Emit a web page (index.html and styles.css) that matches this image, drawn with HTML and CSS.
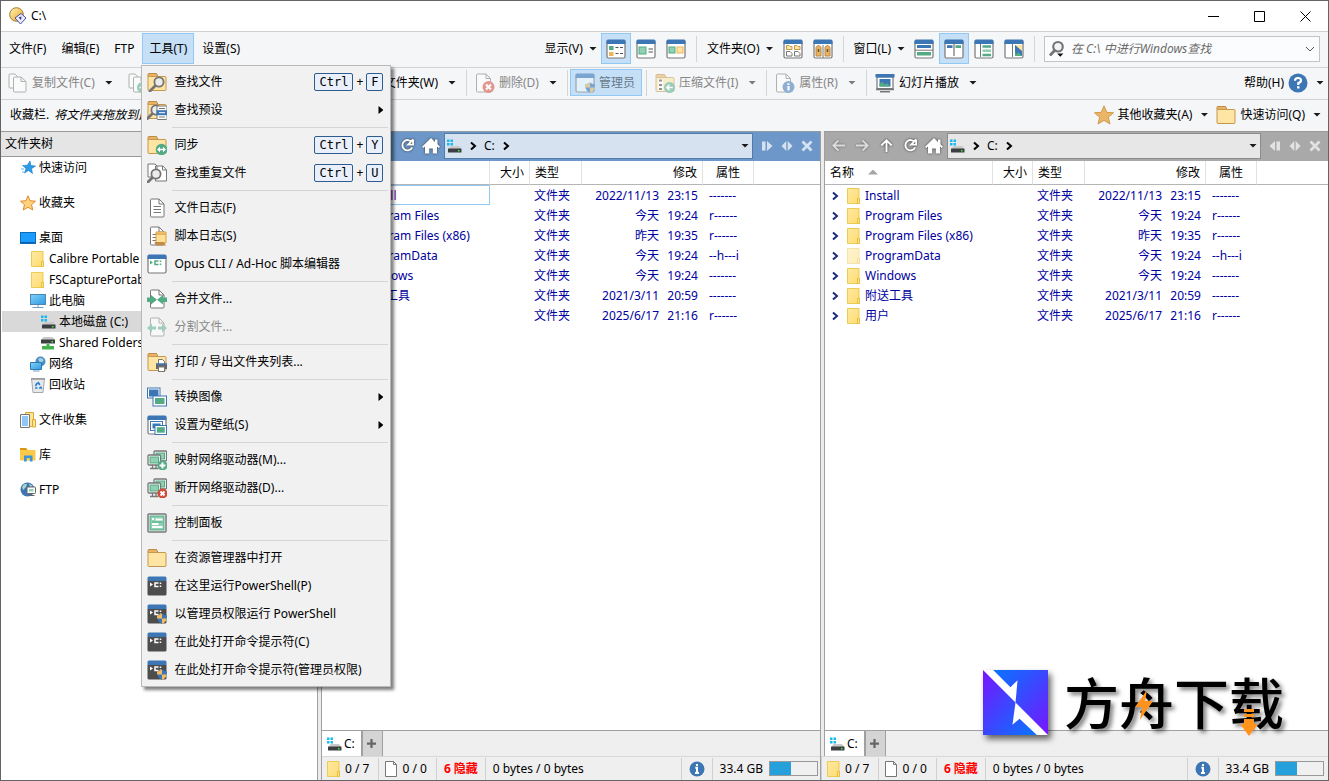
FILE: index.html
```html
<!DOCTYPE html>
<html lang="zh-CN">
<head>
    <meta charset="UTF-8">
    <meta name="viewport" content="width=device-width, initial-scale=1.0">
    <title>C:\</title>
    <link rel="stylesheet" href="styles.css">
</head>
<body>
    <!-- Icon set -->
    <svg class="sprite" aria-hidden="true">
        <defs>
            <linearGradient id="gFolder" x1="0" y1="0" x2="1" y2="1"><stop offset="0" stop-color="#ffe9a0"/><stop offset="1" stop-color="#fddc72"/></linearGradient>
            <linearGradient id="gBall" x1="0" y1="0" x2="1" y2="1"><stop offset="0" stop-color="#fff3b8"/><stop offset="1" stop-color="#eba422"/></linearGradient>
            <linearGradient id="gScreen" x1="0" y1="0" x2="1" y2="1"><stop offset="0" stop-color="#7fd0fb"/><stop offset="1" stop-color="#2f9be0"/></linearGradient>
            <linearGradient id="gLogoA" x1="0" y1="0" x2="1" y2="1"><stop offset="0" stop-color="#0a74ff"/><stop offset="0.4" stop-color="#3050ff"/><stop offset="1" stop-color="#7a14ff"/></linearGradient>
            <linearGradient id="gLogoB" x1="0" y1="0" x2="1" y2="1"><stop offset="0" stop-color="#7a14ff"/><stop offset="0.6" stop-color="#3050ff"/><stop offset="1" stop-color="#0a74ff"/></linearGradient>
        </defs>
        <symbol id="i-app" viewBox="0 0 18 18">
            <circle cx="7.500" cy="7.500" r="6.800" fill="url(#gBall)" stroke="#a5792a"/>
            <path d="M6 11L12 6.500L17 11L11.500 17z" fill="#e9edfb" stroke="#4a4f9c"/>
            <path d="M9.500 10.500L12.500 9.500L12 13z" fill="#303890"/>
        </symbol>
        <symbol id="i-folder" viewBox="0 0 20 20">
            <path d="M1 5V2.500Q1 1.500 2 1.500H9.500L11 4.500H18" fill="#e8b366" stroke="#c08a42"/>
            <rect x="1" y="4.500" width="18" height="14" rx="1" fill="#fee5a4" stroke="#c5974f"/>
        </symbol>
        <symbol id="i-page" viewBox="0 0 20 20">
            <path d="M3.500 2Q3.500 1 4.500 1H12L17 6V18Q17 19 16 19H4.500Q3.500 19 3.500 18z" fill="#fff" stroke="#777"/>
            <path d="M12 1V6H17" fill="none" stroke="#777"/>
        </symbol>
        <symbol id="i-win" viewBox="0 0 20 20">
            <rect x="1" y="1.500" width="18" height="17.500" rx="1.500" fill="#fff" stroke="#777" stroke-width="1.200"/>
            <path d="M.5 5V2Q.5.5 2 .5H18Q19.500.5 19.500 2V5z" fill="#3d76b4"/>
        </symbol>
        <symbol id="i-mag" viewBox="0 0 20 20">
            <path d="M9 13L3 19" stroke="#747474" stroke-width="2.800" stroke-linecap="round"/>
            <circle cx="12" cy="10" r="4.600" fill="#ececec" stroke="#747474" stroke-width="1.800"/>
        </symbol>
        <symbol id="i-shield" viewBox="0 0 20 20">
            <path d="M15 9.500Q17 11 20 11.500Q20 17.500 15 20Q10 17.500 10 11.500Q13 11 15 9.500z" fill="#3d76b4"/>
            <path d="M15 9.500Q13 11 10 11.500L10.200 14.500H15zM15 14.500H19.700Q19 18 15 20z" fill="#f0bb63"/>
        </symbol>
        <symbol id="i-copy" viewBox="0 0 20 20">
            <path d="M1 2Q1 1 2 1H7L9.500 3.500V15H2Q1 15 1 14z" fill="#fff" stroke="#777"/>
            <path d="M5.500 5Q5.500 4 6.500 4H13L18 8.500V18Q18 19 17 19H6.500Q5.500 19 5.500 18zM13 4V8.500H18" fill="#fff" stroke="#777"/>
        </symbol>
        <symbol id="i-move" viewBox="0 0 20 20">
            <use href="#i-copy"/>
            <circle cx="14.500" cy="14.500" r="5.500" fill="#53ab84"/>
            <path d="M11.500 14.500H17M14.800 12L17.300 14.500L14.800 17" fill="none" stroke="#fff" stroke-width="1.600"/>
        </symbol>
        <symbol id="i-newfolder" viewBox="0 0 20 20">
            <use href="#i-folder"/>
            <circle cx="14.500" cy="14.500" r="5.500" fill="#53ab84"/>
            <path d="M14.500 11.500V17.500M11.500 14.500H17.500" stroke="#fff" stroke-width="2"/>
        </symbol>
        <symbol id="i-delete" viewBox="0 0 20 20">
            <path d="M1.500 2Q1.500 1 2.500 1H11L15.500 5.500V19H2.500Q1.500 19 1.500 18zM11 1V5.500H15.500" fill="#fff" stroke="#777"/>
            <circle cx="13.500" cy="14" r="6" fill="#d24a38"/>
            <path d="M11 11.500L16 16.500M16 11.500L11 16.500" stroke="#fff" stroke-width="2.200"/>
        </symbol>
        <symbol id="i-admin" viewBox="0 0 20 20">
            <use href="#i-win"/><use href="#i-shield"/>
        </symbol>
        <symbol id="i-archive" viewBox="0 0 20 20">
            <use href="#i-folder"/>
            <rect x="3" y="6" width="5" height="12" fill="#fff"/>
            <path d="M4 7.500H7M4 12H7M4 16H7" stroke="#444" stroke-width="2.200"/>
            <circle cx="14.500" cy="14.500" r="5.500" fill="#53ab84"/>
            <path d="M17.800 14.500H12M14.500 11.800L11.800 14.500L14.500 17.200" fill="none" stroke="#fff" stroke-width="1.600"/>
        </symbol>
        <symbol id="i-props" viewBox="0 0 20 20">
            <path d="M1.500 2Q1.500 1 2.500 1H11L15.500 5.500V19H2.500Q1.500 19 1.500 18zM11 1V5.500H15.500" fill="#fff" stroke="#777"/>
            <circle cx="13.500" cy="14" r="6" fill="#3d76b4"/>
            <path d="M13.500 10.200V12M13.500 13V17.500" stroke="#fff" stroke-width="2.200"/>
        </symbol>
        <symbol id="i-slides" viewBox="0 0 20 20">
            <path d="M2 4H18V15.500H2z" fill="#fff" stroke="#777" stroke-width="1.200"/>
            <rect x="4.500" y="6" width="11" height="7.500" fill="#3d76b4"/>
            <path d="M4.500 13.500V11L7 9L10 11.500L12 10L15.500 13.500z" fill="#53ab84"/>
            <rect x=".5" y="1" width="19" height="3.500" rx=".5" fill="#3d76b4"/>
            <path d="M1 16.500H19M5 18.800H15" stroke="#777" stroke-width="1.400"/>
        </symbol>
        <symbol id="i-help" viewBox="0 0 20 20">
            <circle cx="10" cy="10" r="9.500" fill="#3d76b4"/>
            <path d="M7 7.800Q7 5 10 5T13 7.500Q13 9.300 10.300 10V12" fill="none" stroke="#fff" stroke-width="2.200"/>
            <rect x="9.100" y="13.200" width="2.400" height="2.300" fill="#fff"/>
        </symbol>
        <symbol id="i-info" viewBox="0 0 16 16">
            <circle cx="8" cy="8" r="7.500" fill="#3d76b4"/>
            <path d="M8 3V5M6.300 6.800H8V12M6 12H10" fill="none" stroke="#fff" stroke-width="2"/>
        </symbol>
        <symbol id="i-star" viewBox="0 0 20 20">
            <path d="M10 .8L12.700 7.300L19.500 7.800L14.300 12.300L16 19L10 15.400L4 19L5.700 12.300L.5 7.800L7.300 7.300z" fill="#ebb566" stroke="#cf9a4b"/>
        </symbol>
        <symbol id="i-search" viewBox="0 0 20 20">
            <path d="M6.500 11.500L2 16" stroke="#757575" stroke-width="3.200" stroke-linecap="round"/>
            <circle cx="10" cy="7.500" r="5.300" fill="#f4f4f4" stroke="#757575" stroke-width="2.400"/>
            <path d="M9 15H16L12.500 18.500z" fill="#111"/>
        </symbol>
        <!-- view modes -->
        <symbol id="i-details" viewBox="0 0 20 20">
            <use href="#i-win"/>
            <rect x="3" y="7" width="4.500" height="4" fill="#53ab84"/><rect x="3" y="13" width="4.500" height="4" fill="#ebb35c"/>
            <path d="M9.500 8.500H12.500M14 8.500H17M9.500 14.500H12.500M14 14.500H17" stroke="#555"/>
        </symbol>
        <symbol id="i-tiles" viewBox="0 0 20 20">
            <use href="#i-win"/>
            <rect x="3" y="8" width="7" height="7" fill="#8fd1b2" stroke="#53ab84"/>
            <path d="M12.500 10H17M12.500 13H17" stroke="#555"/>
        </symbol>
        <symbol id="i-thumbs" viewBox="0 0 20 20">
            <use href="#i-win"/>
            <rect x="3" y="8" width="6" height="6" fill="#8fd1b2" stroke="#53ab84"/><rect x="11" y="8" width="6" height="6" fill="#fee5a4" stroke="#ebb35c"/>
        </symbol>
        <symbol id="i-mixed" viewBox="0 0 20 20">
            <use href="#i-win"/>
            <path d="M3.500 6.500H6L7 7.500H9V10.500H3.500zM11.500 6.500H14L15 7.500H17V10.500H11.500z" fill="#fee5a4" stroke="#c5974f"/>
            <path d="M3.500 12.500H7L9 14.500V17H3.500zM11.500 12.500H15L17 14.500V17H11.500z" fill="#fff" stroke="#777"/>
        </symbol>
        <symbol id="i-locks" viewBox="0 0 20 20">
            <use href="#i-win"/>
            <path d="M3 17V8.500Q5.500 4.500 8 8.500V17zM12 17V8.500Q14.500 4.500 17 8.500V17z" fill="#ebb35c" stroke="#b98643"/>
            <path d="M10 6V19" stroke="#777"/><path d="M5.500 10V13M14.500 10V13" stroke="#555" stroke-width="1.500"/>
        </symbol>
        <symbol id="i-hsplit" viewBox="0 0 20 20">
            <use href="#i-win"/>
            <rect x="3" y="6" width="14" height="3" fill="#3d76b4"/><path d="M1 11.200H19" stroke="#777"/><rect x="3" y="13" width="14" height="3.500" fill="#53ab84"/>
        </symbol>
        <symbol id="i-vsplit" viewBox="0 0 20 20">
            <use href="#i-win"/>
            <rect x="3" y="6.200" width="5.500" height="2.800" fill="#3d76b4"/><rect x="11.500" y="6.200" width="5.500" height="2.800" fill="#53ab84"/><path d="M10 5V17" stroke="#555"/>
        </symbol>
        <symbol id="i-treepane" viewBox="0 0 20 20">
            <use href="#i-win"/>
            <path d="M6.500 5V18" stroke="#777"/><path d="M8.500 7.500H17M8.500 16H17" stroke="#53ab84" stroke-width="2.600"/><path d="M8.500 11.700H17" stroke="#8fd1b2" stroke-width="2.600"/>
        </symbol>
        <symbol id="i-viewer" viewBox="0 0 20 20">
            <use href="#i-win"/>
            <path d="M8.500 5V18" stroke="#777"/><rect x="11" y="6" width="7" height="11" fill="#fee5a4"/><path d="M11 6L18 12V17H11z" fill="#3d76b4"/><path d="M11 13L14 17H11z" fill="#53ab84"/><path d="M14 13L18 17H12z" fill="#53ab84"/>
        </symbol>
        <!-- tools menu -->
        <symbol id="i-find" viewBox="0 0 20 20"><use href="#i-folder"/><use href="#i-mag"/></symbol>
        <symbol id="i-findpreset" viewBox="0 0 20 20">
            <use href="#i-folder"/><use href="#i-mag" x="-3"/>
            <rect x="10" y="6" width="10" height="13.500" rx="1" fill="#fff" stroke="#777"/>
            <path d="M12 8.500H18M12 17H18" stroke="#777"/><rect x="9.500" y="10.200" width="11" height="5" fill="#3d76b4"/><path d="M12 12.700H18" stroke="#fff"/>
        </symbol>
        <symbol id="i-sync" viewBox="0 0 20 20">
            <use href="#i-folder"/>
            <circle cx="14.500" cy="14.500" r="5.800" fill="#53ab84"/>
            <path d="M10 14.500L13 11.700V17.300zM19 14.500L16 11.700V17.300z" fill="#fff"/><path d="M12 14.500H17" stroke="#fff" stroke-width="1.500"/>
        </symbol>
        <symbol id="i-dupes" viewBox="0 0 20 20">
            <path d="M1 1H8L10 3V14H1zM8.500 3H16L19.500 7V18H8.500z" fill="#fff" stroke="#777"/><path d="M15.500 3V7H19.500" fill="none" stroke="#777"/>
            <use href="#i-mag" x="-3" y="1"/>
        </symbol>
        <symbol id="i-log" viewBox="0 0 20 20">
            <use href="#i-page"/><path d="M6.500 8.500H14M6.500 11.500H14M6.500 14.500H14" stroke="#777"/>
        </symbol>
        <symbol id="i-scriptlog" viewBox="0 0 20 20">
            <use href="#i-page"/><path d="M5.500 8.500H9M5.500 11.500H9M5.500 14.500H9" stroke="#777"/>
            <path d="M9 6H19V17H9z" fill="#ffdf95" stroke="#d99e48"/><path d="M9 8H19" stroke="#e3a64f" stroke-width="1.500"/><path d="M7.500 16H17Q17 18 19.500 19.500H9.500Q7.500 19 7.500 16z" fill="#c08c4a"/>
        </symbol>
        <symbol id="i-cli" viewBox="0 0 20 20">
            <use href="#i-win"/>
            <path d="M3 6.500L6 8.500L3 10.500z" fill="#53ab84"/><path d="M11.500 7H8V10.500H11.500M13.500 6.500V8M13.500 9.500V11" fill="none" stroke="#53ab84" stroke-width="1.500"/>
        </symbol>
        <symbol id="i-merge" viewBox="0 0 20 20">
            <use href="#i-page"/><path d="M0 8.500H4V6L10 10.700L4 15.500V13H0zM20 8.500H16V6L10 10.700L16 15.500V13H20z" fill="#53ab84"/>
        </symbol>
        <symbol id="i-split" viewBox="0 0 20 20">
            <use href="#i-page"/><path d="M0 11L5 6.500V9.500H9V12.500H5V15.500zM20 11L15 6.500V9.500H11V12.500H15V15.500z" fill="#53ab84"/>
        </symbol>
        <symbol id="i-print" viewBox="0 0 20 20">
            <use href="#i-folder"/>
            <path d="M11.500 12V7.500H15.500L17.500 9.500V12" fill="#fff" stroke="#777"/><path d="M9 11.500H20V17H9z" fill="#666"/><path d="M9 11.500H20V13H9z" fill="#3d76b4"/><rect x="11.500" y="15" width="6" height="4.500" fill="#fff" stroke="#777"/>
        </symbol>
        <symbol id="i-convert" viewBox="0 0 20 20">
            <rect x=".5" y="1" width="12.500" height="10" fill="#fff" stroke="#3d76b4"/><rect x="2" y="2.500" width="9.500" height="7" fill="#3d76b4"/>
            <rect x="6" y="9" width="13.500" height="10" fill="#fff" stroke="#3d76b4"/><rect x="8" y="11" width="9.500" height="6" fill="#53ab84"/>
        </symbol>
        <symbol id="i-wallpaper" viewBox="0 0 20 20">
            <use href="#i-win"/>
            <rect x="3.500" y="6.500" width="12" height="9" fill="#fff" stroke="#3d76b4"/><rect x="5.500" y="8.500" width="8" height="5" fill="#3d76b4"/>
            <rect x="8" y="10.500" width="11.500" height="9" fill="#fff" stroke="#3d76b4"/><rect x="9.800" y="12.200" width="8" height="5.500" fill="#53ab84"/>
        </symbol>
        <symbol id="i-net" viewBox="0 0 20 20">
            <rect x="7" y="1" width="12.500" height="10" rx="1" fill="#fff" stroke="#777" stroke-width="1.300"/><rect x="9" y="3" width="8.500" height="6" fill="#8fd1b2" stroke="#53ab84"/>
            <rect x="1" y="5" width="12.500" height="10" rx="1" fill="#fff" stroke="#777" stroke-width="1.300"/><rect x="3" y="7" width="8.500" height="6" fill="#8fd1b2" stroke="#53ab84"/>
            <path d="M5.500 15V18M9 15V18M3 18.500H11.500" stroke="#777" stroke-width="1.300"/>
        </symbol>
        <symbol id="i-mapdrive" viewBox="0 0 20 20">
            <use href="#i-net"/><circle cx="15.500" cy="15.500" r="5" fill="#53ab84"/><path d="M15.500 12.500V18.500M12.500 15.500H18.500" stroke="#fff" stroke-width="2"/>
        </symbol>
        <symbol id="i-unmapdrive" viewBox="0 0 20 20">
            <use href="#i-net"/><circle cx="15.500" cy="15.500" r="5" fill="#d24a38"/><path d="M13.500 13.500L17.500 17.500M17.500 13.500L13.500 17.500" stroke="#fff" stroke-width="2"/>
        </symbol>
        <symbol id="i-control" viewBox="0 0 20 20">
            <rect x="1" y="1" width="18" height="18" rx="1" fill="#fff" stroke="#777" stroke-width="1.500"/><rect x="3" y="3" width="14" height="14" fill="#8fd1b2" stroke="#53ab84"/>
            <path d="M5 6H7M8.500 6.500H15.500M5 11H11.500M5 14H15.500" stroke="#fff" stroke-width="2"/><path d="M5 9H15.500" stroke="#53ab84"/>
        </symbol>
        <symbol id="i-shell" viewBox="0 0 20 20">
            <path d="M.5 5H19.500V18Q19.500 19.500 18 19.500H2Q.5 19.500.5 18z" fill="#4d4d4d"/><path d="M.5 5V2Q.5.5 2 .5H18Q19.500.5 19.500 2V5z" fill="#3d76b4"/>
            <path d="M3 6.500L6 8.500L3 10.500z" fill="#fff"/><path d="M11.500 7H8V10.500H11.500M13.500 6.500V8M13.500 9.500V11" fill="none" stroke="#fff" stroke-width="1.500"/>
        </symbol>
        <symbol id="i-shelladmin" viewBox="0 0 20 20"><use href="#i-shell"/><use href="#i-shield"/></symbol>
        <!-- folder tree and lists -->
        <symbol id="i-dir" viewBox="0 0 16 16">
            <path d="M1.500.5H13V15.500H1.500z" fill="url(#gFolder)" stroke="#edcb55"/><path d="M11.500 15.500V10.500H13.500V15.500z" fill="#ffe494" stroke="#e6bd3e"/>
        </symbol>
        <symbol id="i-file" viewBox="0 0 16 16">
            <path d="M2.500.5H10.500L13.500 3.500V15.500H2.500z" fill="#fff" stroke="#777"/><path d="M10.500.5V3.500H13.500" fill="none" stroke="#777"/>
        </symbol>
        <symbol id="i-quick" viewBox="0 0 16 16">
            <path d="M10 1L10.800 5.500L15.500 6L11.500 8.700L12.500 13.500L8.500 10.500L4.500 13L6 8.500L2.500 5.500L7.300 5.300z" fill="#2b9be6" stroke="#1878bd" stroke-width=".6"/>
            <path d="M1 9H4M2 12H4M3.500 6H5" stroke="#59b4ee"/>
        </symbol>
        <symbol id="i-fav" viewBox="0 0 16 16">
            <path d="M8 .8L10 5.700L15.500 6.200L11.500 9.700L12.800 15L8 12.300L3.200 15L4.500 9.700L.5 6.200L6 5.700z" fill="#ffd37e" stroke="#e08b2f"/>
        </symbol>
        <symbol id="i-desktop" viewBox="0 0 16 16"><rect x=".5" y="2.500" width="15" height="11" fill="#1a9dff" stroke="#0e6cb8"/><path d="M1 12.500H15" stroke="#0a5fa8"/></symbol>
        <symbol id="i-pc" viewBox="0 0 16 16"><rect x=".5" y="1.500" width="15" height="10" fill="url(#gScreen)" stroke="#4a87b5"/><path d="M2.500 14.500H13.500M8 12V14" stroke="#6f9fc3"/></symbol>
        <symbol id="i-drive" viewBox="0 0 16 16">
            <path d="M1 1.500H3.500V4H1zM4.500 1.500H7V4H4.500zM1 5H3.500V7.500H1zM4.500 5H7V7.500H4.500z" fill="#19b8f0"/>
            <path d="M4.500 8H13L15.500 11H2.500z" fill="#c9c9c9"/><rect x="2" y="10.500" width="13.500" height="4" rx=".5" fill="#3b3f42"/><rect x="12" y="12" width="1.500" height="1.500" fill="#3ff03f"/>
        </symbol>
        <symbol id="i-share" viewBox="0 0 16 16">
            <path d="M3.500 2H12.500L15 5H1z" fill="#c9c9c9"/><rect x="1" y="4.500" width="14" height="4" rx=".5" fill="#3b3f42"/><rect x="11.500" y="6" width="1.500" height="1.500" fill="#3ff03f"/>
            <path d="M6.500 9H9.500V11H14V14.500H2V11H6.500z" fill="#43b34c"/>
        </symbol>
        <symbol id="i-network" viewBox="0 0 16 16"><circle cx="10.500" cy="5.500" r="5" fill="#4a8fc0"/><path d="M8 3Q11 1 13 3T10 7z" fill="#9fd0e8"/><path d="M.5 6.500H11.500V13.500H.5z" fill="url(#gScreen)" stroke="#3278b0"/><path d="M3 15H9.500" stroke="#6f9fc3"/></symbol>
        <symbol id="i-bin" viewBox="0 0 16 16"><path d="M1.500 1.500H14.500L13 15.500H3z" fill="#e6e9ec" stroke="#a4a8ab"/><path d="M1 2H15" stroke="#999" stroke-width="1.500"/><path d="M8 5L9.800 8M7.300 5.800L5.500 9M5 11H7.500M9 11H11.200L10.500 9.500" fill="none" stroke="#2d7fd0" stroke-width="1.700"/></symbol>
        <symbol id="i-collect" viewBox="0 0 16 16"><path d="M5.500.5H13.500V14.500H5.500z" fill="#ffe494" stroke="#d9aa3a"/><path d="M12.500 7.500H15.500V15H12.500z" fill="#ffe494" stroke="#d9aa3a"/><path d="M.5 2.500H9.500V15.500H.5z" fill="#f5f9ff" stroke="#777"/><rect x="2" y="4" width="6" height="10" fill="#8fc6f4"/></symbol>
        <symbol id="i-lib" viewBox="0 0 16 16"><path d="M0 1H6L7.500 3H15.500V13.500H0z" fill="#fdc94a"/><path d="M0 1H6L7.500 3H0z" fill="#d8960c"/><path d="M4 8.500H12.500V14.500H9.800V11H6.700V14.500H4z" fill="#3b95d8"/></symbol>
        <symbol id="i-ftp" viewBox="0 0 16 16"><circle cx="7.500" cy="7.500" r="7" fill="#3d76b4"/><path d="M2 5Q4 1 7 2L6 5L3 8zM9 1.500L13 4L10 5z" fill="#a8d6c4"/><rect x="7" y="5" width="8.500" height="6.500" rx=".8" fill="#fff" stroke="#666"/><rect x="9" y="7" width="4.500" height="2.500" fill="#8fd1b2"/><path d="M8.500 13.500H14.500M11.500 12V14" stroke="#666"/></symbol>
        <!-- navigation -->
        <symbol id="i-back" viewBox="0 0 16 16"><path d="M15 8H3M8 2.500L2.500 8L8 13.500"/></symbol>
        <symbol id="i-fwd" viewBox="0 0 16 16"><path d="M1 8H13M8 2.500L13.500 8L8 13.500"/></symbol>
        <symbol id="i-up" viewBox="0 0 16 16"><path d="M8 15V3M2.500 8L8 2.500L13.500 8"/></symbol>
        <symbol id="i-reload" viewBox="0 0 16 16"><path d="M12.500 4.500A5.500 5.500 0 1 0 13 10M14 1.500V7H8.800L14 1.500"/></symbol>
        <symbol id="i-home" viewBox="0 0 20 18"><path d="M10 1L1 9.800L2.500 11L4 9.600V16.500H8.200V11.500H11.800V16.500H16V9.600L17.500 11L19 9.800L16.500 7.300V2.500H14V5z"/></symbol>
        <symbol id="i-chev" viewBox="0 0 8 10"><path d="M2 1.500L6 5L2 8.500" fill="none" stroke="currentColor" stroke-width="2"/></symbol>
        <symbol id="i-dualright" viewBox="0 0 12 12"><path d="M1 1.500H4.500V10.500H1zM6 1L11.500 6L6 11z" fill="currentColor"/></symbol>
        <symbol id="i-dualleft" viewBox="0 0 12 12"><path d="M11 1.500H7.500V10.500H11zM6 1L.5 6L6 11z" fill="currentColor"/></symbol>
        <symbol id="i-swap" viewBox="0 0 12 12"><path d="M5.300 1V11L.5 6zM6.700 1V11L11.500 6z" fill="currentColor"/></symbol>
        <symbol id="i-x" viewBox="0 0 12 12"><path d="M1.500 1.500L10.500 10.500M10.500 1.500L1.500 10.500" stroke="currentColor" stroke-width="2.800"/></symbol>
    </svg>

    <div class="window">
        <header class="titlebar">
            <svg class="app-icon"><use href="#i-app"/></svg>
            <span class="title">C:\</span>
            <button class="win-btn" aria-label="最小化"><svg viewBox="0 0 11 11"><path d="M0 5.500H11"/></svg></button>
            <button class="win-btn" aria-label="最大化"><svg viewBox="0 0 11 11"><path d="M.5.5H10.500V10.500H.5z"/></svg></button>
            <button class="win-btn" aria-label="关闭"><svg viewBox="0 0 11 11"><path d="M.5.5L10.500 10.500M10.500.5L.5 10.500"/></svg></button>
        </header>

        <nav class="bar menubar">
            <button class="menu-btn">文件(F)</button>
            <button class="menu-btn">编辑(E)</button>
            <button class="menu-btn">FTP</button>
            <div class="menu-wrap">
                <button class="menu-btn active" aria-expanded="true">工具(T)</button>
                <div class="dropdown" role="menu">
                    <button role="menuitem"><svg><use href="#i-find"/></svg>查找文件<span class="keys"><kbd>Ctrl</kbd>+<kbd>F</kbd></span></button>
                    <button role="menuitem"><svg><use href="#i-findpreset"/></svg>查找预设<i class="sub"></i></button>
                    <hr>
                    <button role="menuitem"><svg><use href="#i-sync"/></svg>同步<span class="keys"><kbd>Ctrl</kbd>+<kbd>Y</kbd></span></button>
                    <button role="menuitem"><svg><use href="#i-dupes"/></svg>查找重复文件<span class="keys"><kbd>Ctrl</kbd>+<kbd>U</kbd></span></button>
                    <hr>
                    <button role="menuitem"><svg><use href="#i-log"/></svg>文件日志(F)</button>
                    <button role="menuitem"><svg><use href="#i-scriptlog"/></svg>脚本日志(S)</button>
                    <button role="menuitem"><svg><use href="#i-cli"/></svg>Opus CLI / Ad-Hoc 脚本编辑器</button>
                    <hr>
                    <button role="menuitem"><svg><use href="#i-merge"/></svg>合并文件...</button>
                    <button role="menuitem" disabled><svg><use href="#i-split"/></svg>分割文件...</button>
                    <hr>
                    <button role="menuitem"><svg><use href="#i-print"/></svg>打印 / 导出文件夹列表...</button>
                    <hr>
                    <button role="menuitem"><svg><use href="#i-convert"/></svg>转换图像<i class="sub"></i></button>
                    <button role="menuitem"><svg><use href="#i-wallpaper"/></svg>设置为壁纸(S)<i class="sub"></i></button>
                    <hr>
                    <button role="menuitem"><svg><use href="#i-mapdrive"/></svg>映射网络驱动器(M)...</button>
                    <button role="menuitem"><svg><use href="#i-unmapdrive"/></svg>断开网络驱动器(D)...</button>
                    <hr>
                    <button role="menuitem"><svg><use href="#i-control"/></svg>控制面板</button>
                    <hr>
                    <button role="menuitem"><svg><use href="#i-folder"/></svg>在资源管理器中打开</button>
                    <button role="menuitem"><svg><use href="#i-shell"/></svg>在这里运行PowerShell(P)</button>
                    <button role="menuitem"><svg><use href="#i-shelladmin"/></svg>以管理员权限运行 PowerShell</button>
                    <button role="menuitem"><svg><use href="#i-shell"/></svg>在此处打开命令提示符(C)</button>
                    <button role="menuitem"><svg><use href="#i-shelladmin"/></svg>在此处打开命令提示符(管理员权限)</button>
                </div>
            </div>
            <button class="menu-btn">设置(S)</button>

            <div class="views">
                <button class="drop-btn">显示(V)<i class="caret"></i></button>
                <button class="icon-btn active" aria-label="详细信息"><svg><use href="#i-details"/></svg></button>
                <button class="icon-btn" aria-label="平铺"><svg><use href="#i-tiles"/></svg></button>
                <button class="icon-btn" aria-label="缩略图"><svg><use href="#i-thumbs"/></svg></button>
                <span class="sep"></span>
                <button class="drop-btn">文件夹(O)<i class="caret"></i></button>
                <button class="icon-btn" aria-label="混合排序"><svg><use href="#i-mixed"/></svg></button>
                <button class="icon-btn" aria-label="锁定格式"><svg><use href="#i-locks"/></svg></button>
                <span class="sep"></span>
                <button class="drop-btn">窗口(L)<i class="caret"></i></button>
                <button class="icon-btn" aria-label="水平双栏"><svg><use href="#i-hsplit"/></svg></button>
                <button class="icon-btn active" aria-label="垂直双栏"><svg><use href="#i-vsplit"/></svg></button>
                <button class="icon-btn" aria-label="文件夹树"><svg><use href="#i-treepane"/></svg></button>
                <button class="icon-btn" aria-label="查看器"><svg><use href="#i-viewer"/></svg></button>
                <span class="sep"></span>
                <div class="search">
                    <svg><use href="#i-search"/></svg>
                    <input type="text" aria-label="查找" placeholder="在 C:\ 中进行Windows查找">
                    <svg class="search-more" viewBox="0 0 10 6"><path d="M1 1L5 5L9 1"/></svg>
                </div>
            </div>
        </nav>

        <div class="bar toolbar">
            <div class="edit-group">
                <button class="tool" disabled><svg><use href="#i-copy"/></svg>复制文件(C)</button>
                <button class="arrow-btn" aria-label="复制选项"><i class="caret"></i></button>
                <button class="tool" aria-label="移动文件" disabled><svg><use href="#i-move"/></svg></button>
                <button class="tool new-folder"><svg><use href="#i-newfolder"/></svg>新建文件夹(W)</button>
                <button class="arrow-btn" aria-label="新建选项"><i class="caret"></i></button>
            </div>
            <span class="sep"></span>
            <button class="tool" disabled><svg><use href="#i-delete"/></svg>删除(D)</button>
            <button class="arrow-btn" aria-label="删除选项"><i class="caret"></i></button>
            <span class="sep"></span>
            <button class="tool admin" disabled><svg><use href="#i-admin"/></svg>管理员</button>
            <span class="sep"></span>
            <button class="tool" disabled><svg><use href="#i-archive"/></svg>压缩文件(I)</button>
            <button class="arrow-btn" aria-label="压缩选项" disabled><i class="caret"></i></button>
            <span class="sep"></span>
            <button class="tool" disabled><svg><use href="#i-props"/></svg>属性(R)</button>
            <button class="arrow-btn" aria-label="属性选项" disabled><i class="caret"></i></button>
            <span class="sep"></span>
            <button class="tool"><svg><use href="#i-slides"/></svg>幻灯片播放</button>
            <button class="arrow-btn" aria-label="播放选项"><i class="caret"></i></button>
            <button class="tool end">帮助(H)<svg><use href="#i-help"/></svg><i class="caret"></i></button>
        </div>

        <div class="bar favbar">
            <span class="fav-label">收藏栏.</span>
            <em>将文件夹拖放到此处来添加</em>
            <button class="tool end"><svg><use href="#i-star"/></svg>其他收藏夹(A)<i class="caret"></i></button>
            <button class="tool"><svg><use href="#i-folder"/></svg>快速访问(Q)<i class="caret"></i></button>
        </div>

        <main class="panes">
            <aside class="tree">
                <h2>文件夹树</h2>
                <ul>
                    <li class="root"><svg><use href="#i-quick"/></svg>快速访问</li>
                    <li class="root"><svg><use href="#i-fav"/></svg>收藏夹</li>
                    <li class="root"><svg><use href="#i-desktop"/></svg>桌面</li>
                    <li class="lv1"><svg><use href="#i-dir"/></svg>Calibre Portable</li>
                    <li class="lv1"><svg><use href="#i-dir"/></svg>FSCapturePortable</li>
                    <li class="lv1"><svg><use href="#i-pc"/></svg>此电脑</li>
                    <li class="lv2 selected"><svg><use href="#i-drive"/></svg>本地磁盘 (C:)</li>
                    <li class="lv2"><svg><use href="#i-share"/></svg>Shared Folders</li>
                    <li class="lv1"><svg><use href="#i-network"/></svg>网络</li>
                    <li class="lv1"><svg><use href="#i-bin"/></svg>回收站</li>
                    <li class="root"><svg><use href="#i-collect"/></svg>文件收集</li>
                    <li class="root"><svg><use href="#i-lib"/></svg>库</li>
                    <li class="root"><svg><use href="#i-ftp"/></svg>FTP</li>
                </ul>
            </aside>
            <div class="splitter"></div>

            <section class="lister source">
                <div class="pathbar">
                    <button class="nav-btn" aria-label="后退" disabled><svg><use href="#i-back"/></svg></button>
                    <button class="nav-btn" aria-label="前进" disabled><svg><use href="#i-fwd"/></svg></button>
                    <button class="nav-btn" aria-label="向上"><svg><use href="#i-up"/></svg></button>
                    <button class="nav-btn" aria-label="刷新"><svg><use href="#i-reload"/></svg></button>
                    <button class="nav-btn home" aria-label="主页"><svg><use href="#i-home"/></svg></button>
                    <div class="address">
                        <svg><use href="#i-drive"/></svg>
                        <svg class="chev"><use href="#i-chev"/></svg>
                        <a href="#">C:</a>
                        <svg class="chev"><use href="#i-chev"/></svg>
                        <i class="caret"></i>
                    </div>
                    <div class="pane-btns">
                        <button aria-label="复制到右侧"><svg><use href="#i-dualright"/></svg></button>
                        <button aria-label="交换"><svg><use href="#i-swap"/></svg></button>
                        <button aria-label="关闭"><svg><use href="#i-x"/></svg></button>
                    </div>
                </div>
                <div class="files"></div>
                <div class="tabs">
                    <button class="tab"><svg><use href="#i-drive"/></svg>C:</button>
                    <button class="add-tab" aria-label="新标签"><svg viewBox="0 0 8 8"><path d="M4 0V8M0 4H8"/></svg></button>
                </div>
                <footer class="status"></footer>
            </section>
            <div class="splitter"></div>

            <section class="lister dest">
                <div class="pathbar">
                    <button class="nav-btn" aria-label="后退" disabled><svg><use href="#i-back"/></svg></button>
                    <button class="nav-btn" aria-label="前进" disabled><svg><use href="#i-fwd"/></svg></button>
                    <button class="nav-btn" aria-label="向上"><svg><use href="#i-up"/></svg></button>
                    <button class="nav-btn" aria-label="刷新"><svg><use href="#i-reload"/></svg></button>
                    <button class="nav-btn home" aria-label="主页"><svg><use href="#i-home"/></svg></button>
                    <div class="address">
                        <svg><use href="#i-drive"/></svg>
                        <svg class="chev"><use href="#i-chev"/></svg>
                        <a href="#">C:</a>
                        <svg class="chev"><use href="#i-chev"/></svg>
                        <i class="caret"></i>
                    </div>
                    <div class="pane-btns">
                        <button aria-label="复制到左侧"><svg><use href="#i-dualleft"/></svg></button>
                        <button aria-label="交换"><svg><use href="#i-swap"/></svg></button>
                        <button aria-label="关闭"><svg><use href="#i-x"/></svg></button>
                    </div>
                </div>
                <div class="files"></div>
                <div class="tabs">
                    <button class="tab"><svg><use href="#i-drive"/></svg>C:</button>
                    <button class="add-tab" aria-label="新标签"><svg viewBox="0 0 8 8"><path d="M4 0V8M0 4H8"/></svg></button>
                </div>
                <footer class="status"></footer>
            </section>
        </main>

        <div class="watermark">
            <svg class="mark" viewBox="0 0 64 64">
                <rect width="64" height="64" fill="#fff"/>
                <path d="M10 0H64V64L32 32L34 10L27 17z" fill="url(#gLogoA)"/>
                <path d="M0 0L32 32L29 54L36 48L53 64H0z" fill="url(#gLogoB)"/>
            </svg>
            <span class="word">方舟下载
                <svg class="bolt" viewBox="0 0 20 30"><path d="M13 0L1 17H8L6 30L19 11H11z"/></svg>
                <svg class="down" viewBox="0 0 18 28"><path d="M4 0H14V3H4zM4 5H14V8H4zM4 10H14V15H18L9 27L0 15H4z"/></svg>
            </span>
        </div>
    </div>

    <script>
        const files = [
            ['Install', '2022/11/13', '23:15', '-------'],
            ['Program Files', '今天', '19:24', 'r------'],
            ['Program Files (x86)', '昨天', '19:35', 'r------'],
            ['ProgramData', '今天', '19:24', '--h---i'],
            ['Windows', '今天', '19:24', '-------'],
            ['附送工具', '2021/3/11', '20:59', '-------'],
            ['用户', '2025/6/17', '21:16', 'r------']
        ];

        const rows = files.map(([name, date, time, attr]) => `
            <tr class="${attr.includes('h') ? 'hidden-item' : ''}">
                <td class="name"><svg class="chev"><use href="#i-chev"/></svg><svg class="dir"><use href="#i-dir"/></svg>${name}</td>
                <td></td>
                <td class="type">文件夹</td>
                <td class="date">${date}<span>${time}</span></td>
                <td class="attr">${attr}</td>
                <td></td>
            </tr>`).join('');

        document.querySelectorAll('.files').forEach(el => {
            el.innerHTML = `
                <table>
                    <colgroup><col class="c-name"><col class="c-size"><col class="c-type"><col class="c-date"><col class="c-attr"><col></colgroup>
                    <thead><tr>
                        <th>名称<i class="sort"></i></th><th class="right">大小</th><th>类型</th>
                        <th class="right">修改</th><th class="center">属性</th><th></th>
                    </tr></thead>
                    <tbody>${rows}</tbody>
                </table>`;
        });

        const used = 44;
        document.querySelectorAll('.status').forEach(el => {
            el.innerHTML = `
                <span><svg><use href="#i-dir"/></svg>0 / 7</span>
                <span><svg><use href="#i-file"/></svg>0 / 0</span>
                <span class="hidden-count">6 隐藏</span>
                <span class="bytes">0 bytes / 0 bytes</span>
                <span class="info"><svg><use href="#i-info"/></svg></span>
                <span class="space">33.4 GB<b class="meter"><b style="width: ${used}%"></b></b></span>`;
        });
    </script>
</body>
</html>
```
FILE: styles.css
```css
* {
    box-sizing: border-box;
}
body {
    margin: 0;
    font-family: "Noto Sans", "Noto Sans CJK SC", sans-serif;
    font-size: 12px;
    line-height: 18px;
    color: #000;
    overflow: hidden;
}
button, input {
    font: inherit;
    color: inherit;
    background: none;
    border: 0;
    padding: 0;
    margin: 0;
    white-space: nowrap;
}
svg {
    display: block;
    flex: none;
}
.sprite {
    position: absolute;
    width: 0;
    height: 0;
}
.window {
    position: relative;
    display: flex;
    flex-direction: column;
    min-height: 100vh;
    border: 1px solid #646464;
    background: #fff;
}

/* title bar */
.titlebar {
    display: flex;
    align-items: center;
    height: 31px;
    padding-left: 8px;
    border-bottom: 1px solid #cfcfcf;
}
.app-icon {
    width: 18px;
    height: 18px;
}
.title {
    flex: 1;
    margin-left: 4px;
}
.win-btn {
    display: flex;
    justify-content: center;
    width: 46px;
}
.win-btn svg {
    width: 11px;
    height: 11px;
    fill: none;
    stroke: #000;
}

/* toolbars */
.bar {
    display: flex;
    align-items: center;
    background: #f5f6f8;
    border-bottom: 1px solid #d2d3d5;
}
.menubar {
    gap: 1px;
    height: 36px;
    padding: 0 8px 2px 1px;
}
.menu-wrap {
    position: relative;
}
.menu-btn {
    height: 31px;
    padding: 0 7px;
}
.menu-btn.active, .icon-btn.active, .admin {
    background: #c5dff6;
    box-shadow: inset 0 0 0 1px #92c8f4;
}
.views {
    display: flex;
    align-items: center;
    margin-left: auto;
}
.drop-btn {
    display: flex;
    align-items: center;
    gap: 6px;
    padding: 0 4px 0 10px;
}
.caret {
    width: 8px;
    height: 4px;
    background: #1a1a1a;
    clip-path: polygon(0 0, 100% 0, 50% 100%);
}
.icon-btn {
    display: flex;
    align-items: center;
    justify-content: center;
    width: 30px;
    height: 31px;
}
.icon-btn svg, .tool svg, .dropdown svg {
    width: 20px;
    height: 20px;
}
.sep {
    width: 1px;
    height: 26px;
    background: #d4d5d7;
}
.views .sep {
    margin-left: 5px;
}
.search {
    display: flex;
    align-items: center;
    width: 276px;
    height: 26px;
    margin-left: 9px;
    padding: 0 4px;
    border: 1px solid #c4c4c4;
    background: #fbfcfd;
}
.search svg {
    width: 18px;
    height: 18px;
}
.search input {
    flex: 1;
    min-width: 0;
    padding-left: 4px;
    font-style: italic;
    outline: none;
}
.search input::placeholder {
    color: #6b6b6b;
    opacity: 1;
}
.search .search-more {
    width: 10px;
    height: 6px;
    fill: none;
    stroke: #555;
}
.toolbar {
    height: 32px;
    padding: 0 4px 2px 2px;
}
.edit-group {
    display: flex;
    align-items: center;
    flex: 0 0 463px;
}
.new-folder {
    margin-left: auto;
}
.tool {
    display: flex;
    align-items: center;
    gap: 4px;
    height: 27px;
    padding: 0 0 0 8px;
}
.edit-group .tool {
    padding-left: 5px;
}
.tool:disabled {
    color: #858585;
}
.tool:disabled svg, .arrow-btn:disabled {
    opacity: 0.55;
}
.arrow-btn {
    display: flex;
    justify-content: center;
    width: 28px;
}
.tool.admin {
    margin: 0 4px 0 2px;
    padding: 0 7px 0 5px;
    color: #667888;
}
.tool.end {
    margin-left: auto;
}
.favbar {
    height: 31px;
    padding: 0 7px 2px 9px;
    border-bottom: 0;
}
.favbar em {
    margin-left: 5px;
}
.tool .caret {
    margin-left: 4px;
}

/* tools menu */
.dropdown {
    position: absolute;
    z-index: 10;
    top: 32px;
    left: -1px;
    width: 250px;
    padding: 2px;
    background: #f1f1f1;
    border: 1px solid #b9b9b9;
    box-shadow: 3px 3px 3px rgba(0, 0, 0, 0.5);
}
.dropdown button {
    display: flex;
    align-items: center;
    width: 100%;
    height: 28px;
    padding: 0 5px 0 3px;
}
.dropdown button > svg {
    margin-right: 7px;
}
.dropdown button:disabled {
    color: #8a8a8a;
}
.dropdown button:disabled svg {
    opacity: 0.5;
}
.dropdown hr {
    height: 1px;
    margin: 3px 0 3px 28px;
    border: 0;
    background: #d5d5d5;
}
.keys {
    display: flex;
    align-items: center;
    gap: 3px;
    margin-left: auto;
}
.keys kbd {
    height: 18px;
    padding: 0 4px;
    border: 1px solid #2f5c8f;
    border-radius: 2px;
    background: #e9f0fb;
    font: 12px/16px "DejaVu Sans Mono", monospace;
}
.sub {
    width: 5px;
    height: 8px;
    margin-left: auto;
    background: #000;
    clip-path: polygon(0 0, 100% 50%, 0 100%);
}

/* panes */
.panes {
    display: flex;
    flex: 1;
}
.splitter {
    width: 5px;
    background: #ececec;
    border: solid #a0a0a0;
    border-width: 0 1px;
}
.tree {
    flex: 0 0 316px;
    border-top: 1px solid #9a9a9a;
}
.tree h2 {
    margin: 0;
    padding: 3px 4px;
    font-size: 12px;
    font-weight: normal;
    background: #e5e5e5;
    border-bottom: 1px solid #9a9a9a;
}
.tree ul {
    list-style: none;
    margin: 0;
    padding: 0 0 0 1px;
}
.tree li {
    display: flex;
    align-items: center;
    gap: 3px;
    height: 21px;
    padding-left: 28px;
    white-space: nowrap;
}
.tree li.root {
    padding-left: 18px;
}
.tree li.root:not(:first-child) {
    margin-top: 14px;
}
.tree li.lv2 {
    padding-left: 38px;
}
.tree li.selected {
    background: #d9d9d9;
}
.tree svg {
    width: 16px;
    height: 16px;
}
.lister {
    display: flex;
    flex-direction: column;
    flex: 1 1 0;
    min-width: 0;
}
.lister.dest {
    flex-basis: 5px;
}
.pathbar {
    display: flex;
    align-items: center;
    height: 30px;
    padding: 0 0 2px 1px;
    background: #6c97c8;
    border-top: 1px solid #8f9aa8;
}
.dest .pathbar {
    background: #a9a9a9;
    border-color: #999;
}
.nav-btn {
    display: flex;
    justify-content: center;
    width: 24px;
}
.nav-btn svg {
    width: 15px;
    height: 15px;
    fill: none;
    stroke: #fff;
    stroke-width: 2;
    filter: drop-shadow(0 0 1px #333);
}
.nav-btn:disabled svg {
    opacity: 0.6;
}
.nav-btn.home svg {
    width: 20px;
    height: 18px;
    fill: #fff;
    stroke: none;
}
.address {
    display: flex;
    align-items: center;
    flex: 1;
    height: 26px;
    margin-left: 1px;
    padding: 0 3px 0 1px;
    background: #d7e2f0;
    border: 1px solid #507cae;
}
.dest .address {
    background: #e7e7e7;
    border-color: #8c8c8c;
}
.address svg {
    width: 16px;
    height: 16px;
}
.address .chev {
    width: 8px;
    height: 10px;
    margin: 0 7px;
}
.address a {
    color: #000;
    text-decoration: none;
}
.address .caret {
    margin-left: auto;
}
.pane-btns {
    display: flex;
    width: 67px;
    padding-left: 4px;
    color: #d5e1ef;
}
.dest .pane-btns {
    color: #e2e2e2;
}
.pane-btns button {
    display: flex;
    justify-content: center;
    width: 20px;
}
.pane-btns svg {
    width: 12px;
    height: 12px;
}

/* file list */
.files {
    flex: 1;
}
.files table {
    width: 100%;
    table-layout: fixed;
    border-collapse: separate;
    border-spacing: 0;
}
.c-name { width: 168px; }
.c-size { width: 40px; }
.c-type { width: 52px; }
.c-date { width: 121px; }
.c-attr { width: 51px; }
.files th {
    height: 24px;
    padding: 0 5px;
    font-weight: normal;
    text-align: left;
    border-right: 1px solid #e2e2e2;
    border-bottom: 1px solid #b5b5b5;
}
.files th:last-child {
    border-right: 0;
}
.files th.right {
    text-align: right;
}
.files th.center {
    text-align: center;
}
.sort {
    display: inline-block;
    width: 10px;
    height: 5px;
    margin: 0 0 2px 14px;
    background: #a6a6a6;
    clip-path: polygon(50% 0, 100% 100%, 0 100%);
}
.files td {
    height: 20px;
    padding: 2px 5px 0;
    color: #0000a0;
    white-space: nowrap;
}
.files td.name {
    display: flex;
    align-items: center;
    padding-left: 6px;
}
.files .chev {
    width: 8px;
    height: 10px;
    margin-right: 7px;
    color: #1c2c80;
}
.files .dir {
    width: 16px;
    height: 16px;
    margin-right: 3px;
}
.hidden-item .dir {
    opacity: 0.5;
}
.source tbody tr:first-child .name {
    box-shadow: inset 0 0 0 1px #92c8f4;
    color: #6a00a0;
}
.files td.type {
    padding-left: 4px;
}
.files td.date {
    text-align: right;
}
.date span {
    display: inline-block;
    width: 39px;
}
.files td.attr {
    padding-left: 6px;
}

/* tabs and status */
.tabs {
    display: flex;
    height: 26px;
    background: #efefef;
    border-top: 1px solid #a0a0a0;
}
.tab {
    display: flex;
    align-items: center;
    gap: 2px;
    padding: 0 6px 0 4px;
    background: #fff;
    border-right: 2px solid #a0a0a0;
}
.tab svg {
    width: 16px;
    height: 16px;
}
.add-tab {
    width: 20px;
    padding-left: 4px;
    background: #d4d4d4;
    border-right: 1px solid #a0a0a0;
}
.add-tab svg {
    width: 9px;
    height: 9px;
    stroke: #666;
    stroke-width: 2;
}
.status {
    display: flex;
    align-items: center;
    height: 24px;
    background: #efefef;
    border-top: 1px solid #d8d8d8;
}
.dest .status {
    margin-left: -4px;
    border-left: 1px solid #d0d0d0;
}
.status > span {
    display: flex;
    align-items: center;
    gap: 3px;
    height: 22px;
    padding: 0 9px 0 4px;
    border-right: 1px solid #d0d0d0;
    white-space: nowrap;
}
.status svg {
    width: 16px;
    height: 16px;
}
.status .hidden-count {
    padding: 0 7px;
    color: #f00;
    font-weight: bold;
}
.status .bytes {
    flex: 1;
    padding-left: 7px;
}
.status .info {
    padding: 0 7px;
}
.status .space {
    gap: 6px;
    padding: 0 2px 0 7px;
    border-right: 0;
}
.dest .space {
    padding-right: 4px;
}
.meter {
    width: 49px;
    height: 15px;
    border: 1px solid #999;
    background: #f0f0f0;
}
.meter b {
    display: block;
    height: 100%;
    background: #26a0da;
}

/* site logo over the right pane */
.watermark {
    position: absolute;
    right: 44px;
    bottom: 45px;
    display: flex;
    align-items: flex-start;
    gap: 16px;
}
.mark {
    width: 65px;
    height: 65px;
    filter: drop-shadow(3px 4px 3px rgba(0, 0, 0, 0.6));
}
.word {
    position: relative;
    font-family: "Noto Sans CJK SC", sans-serif;
    font-size: 55px;
    line-height: 60px;
    font-weight: 500;
    white-space: nowrap;
    text-shadow: 3px 3px 4px rgba(0, 0, 0, 0.5);
}
.word svg {
    position: absolute;
    fill: #ff931e;
}
.bolt {
    top: 20px;
    left: 70px;
    width: 20px;
    height: 30px;
}
.down {
    top: 39px;
    left: 176px;
    width: 18px;
    height: 28px;
}
```
